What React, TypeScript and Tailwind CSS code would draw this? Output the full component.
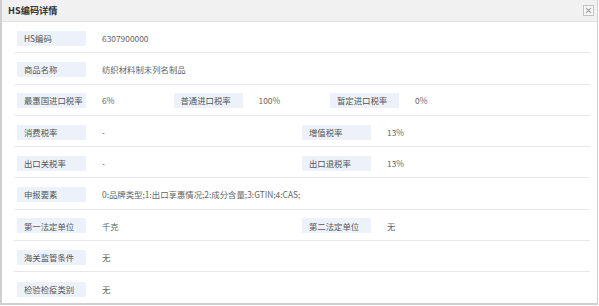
import React from 'react'

type Cell = { label: string; value: string }

const rows: { cols: 2 | 3; cells: Cell[] }[] = [
  { cols: 2, cells: [{ label: 'HS编码', value: '6307900000' }] },
  { cols: 2, cells: [{ label: '商品名称', value: '纺织材料制未列名制品' }] },
  {
    cols: 3,
    cells: [
      { label: '最惠国进口税率', value: '6%' },
      { label: '普通进口税率', value: '100%' },
      { label: '暂定进口税率', value: '0%' },
    ],
  },
  {
    cols: 2,
    cells: [
      { label: '消费税率', value: '-' },
      { label: '增值税率', value: '13%' },
    ],
  },
  {
    cols: 2,
    cells: [
      { label: '出口关税率', value: '-' },
      { label: '出口退税率', value: '13%' },
    ],
  },
  { cols: 2, cells: [{ label: '申报要素', value: '0:品牌类型;1:出口享惠情况;2:成分含量;3:GTIN;4:CAS;' }] },
  {
    cols: 2,
    cells: [
      { label: '第一法定单位', value: '千克' },
      { label: '第二法定单位', value: '无' },
    ],
  },
  { cols: 2, cells: [{ label: '海关监管条件', value: '无' }] },
  { cols: 2, cells: [{ label: '检验检疫类别', value: '无' }] },
]

const CloseIcon = () => (
  <svg width="11" height="11" viewBox="0 0 11 11" className="block">
    <rect x="0.5" y="0.5" width="10" height="10" fill="#f7f7f7" stroke="#c4c4c4" />
    <path d="M3 3 L8 8 M8 3 L3 8" stroke="#a8a8a8" strokeWidth="1.1" />
  </svg>
)

const InfoCell = ({ cell, cols }: { cell: Cell; cols: 2 | 3 }) => (
  <div className={`flex items-center shrink-0 ${cols === 3 ? 'w-[156.5px]' : 'w-[285px]'}`}>
    <div className="w-[69px] h-[15px] bg-[#edf2fa] pl-[7px] flex items-center text-[#555] shrink-0 whitespace-nowrap">
      {cell.label}
    </div>
    <div className="pl-[16px] text-[#666] whitespace-nowrap">{cell.value}</div>
  </div>
)

export default function App() {
  return (
    <div className="w-[599px] h-[306px] bg-white" style={{ fontFamily: '"Noto Sans CJK SC", "Liberation Sans", sans-serif' }}>
      <div className="w-[598px] h-[305px] border-l-2 border-r border-b-2 border-[#cfcfcf] flex flex-col">
        <div className="h-[22px] bg-[#f1f1f1] border-b border-[#e2e2e2] flex items-center justify-between pl-[6px] pr-[3px] shrink-0">
          <span className="text-[9.2px] font-bold text-[#333]">HS编码详情</span>
          <CloseIcon />
        </div>
        <div className="pl-[12px] pr-[7px] text-[8.4px]">
          {rows.map((row, i) => (
            <div
              key={i}
              className={`h-[31.3px] pl-[3px] pt-[2px] flex items-center ${i < rows.length - 1 ? 'border-b border-[#e8e8e8]' : ''}`}
            >
              {row.cells.map((c, j) => (
                <InfoCell key={j} cell={c} cols={row.cols} />
              ))}
            </div>
          ))}
        </div>
      </div>
    </div>
  )
}
